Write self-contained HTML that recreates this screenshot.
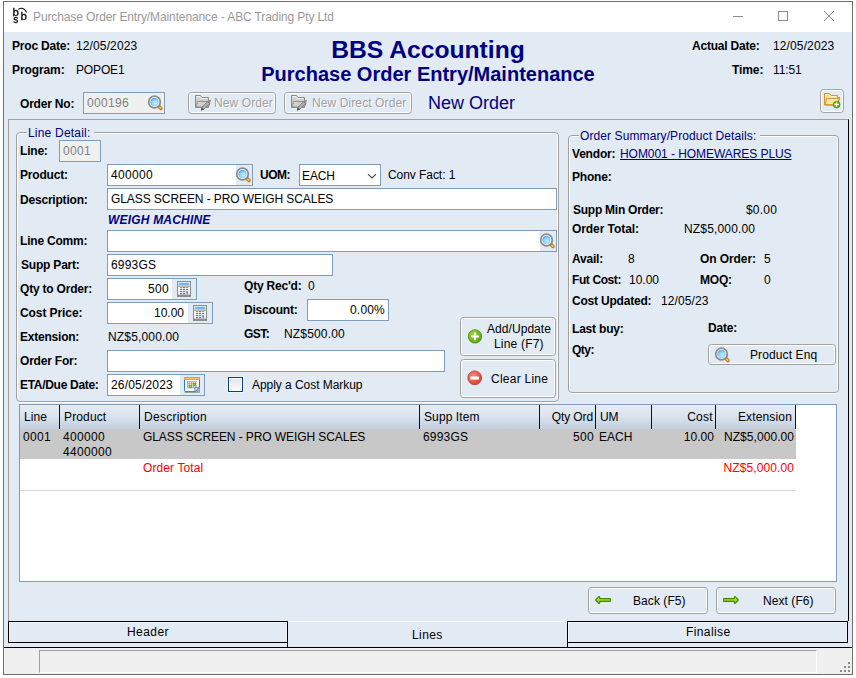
<!DOCTYPE html>
<html lang="en">
<head>
<meta charset="utf-8">
<title>Purchase Order Entry/Maintenance - ABC Trading Pty Ltd</title>
<style>
*{box-sizing:border-box;margin:0;padding:0}
html,body{width:856px;height:678px;overflow:hidden;background:#fff}
body{position:relative;font-family:"Liberation Sans",Arial,sans-serif;font-size:12px;line-height:14px;color:#000}
.a,.t,.b,.in,.btn,.ic,.ib{position:absolute}
.t,.b{white-space:nowrap;height:14px}
.b{font-weight:bold}
.r{text-align:right}
.nv{color:#000080}
.in{background:#fff;border:1px solid #7f9db9;height:22px;white-space:nowrap;padding:3px 3px 0 3px}
.dis{background:#f0f0f0;color:#808080}
.btn{border:1px solid #a3a3a3;border-radius:3.5px;background:#e2eaf3;box-shadow:inset 0 0 0 1px #fff;white-space:nowrap}
.ib{background:#e2eaf3}
.ic{width:16px;height:16px;overflow:visible}
#win{left:3px;top:1px;width:850px;height:674px;border:1px solid #6e6e6e;background:#e2eaf3}
#title{left:4px;top:2px;width:848px;height:30px;background:#fff}
.gb::before{content:'';position:absolute;left:1px;top:1px;right:1px;bottom:-1px;border:1px solid #fff;border-radius:3px}
.gb::after{content:'';position:absolute;left:0;top:0;right:0;bottom:0;border:1px solid #a0a0a0;border-radius:4px}
.lg{background:#e2eaf3}
#gh{background:linear-gradient(#e6ecf4,#dbe3ee 45%,#c2cfdf);}
.hs{top:405px;width:1px;height:24px;background:#111}
.tab{border:1px solid #000;text-align:center;padding-top:3px;box-shadow:inset 1px 1px 0 #f4f7fb,inset -1px 0 0 #f4f7fb}
.dt{color:#a0a0a0;text-shadow:1px 1px 0 #fff}
</style>
</head>
<body>

<svg width="0" height="0" style="position:absolute">
<defs>
<radialGradient id="lens" cx="0.6" cy="0.65" r="0.7"><stop offset="0" stop-color="#b8effc"/><stop offset="0.6" stop-color="#8fd0f5"/><stop offset="1" stop-color="#3f9ce8"/></radialGradient>
<linearGradient id="fold" x1="0" y1="0" x2="0" y2="1"><stop offset="0" stop-color="#fde9a8"/><stop offset="1" stop-color="#f5c75c"/></linearGradient>
<linearGradient id="gfold" x1="0" y1="0" x2="0" y2="1"><stop offset="0" stop-color="#dedede"/><stop offset="1" stop-color="#b2b2b2"/></linearGradient>
<radialGradient id="grn" cx="0.4" cy="0.35" r="0.75"><stop offset="0" stop-color="#a6d83a"/><stop offset="1" stop-color="#4f9a0c"/></radialGradient>
<radialGradient id="red" cx="0.4" cy="0.35" r="0.75"><stop offset="0" stop-color="#f58a7a"/><stop offset="1" stop-color="#d8382c"/></radialGradient>
<linearGradient id="arr" x1="0" y1="0" x2="0" y2="1"><stop offset="0.2" stop-color="#c8ec40"/><stop offset="0.8" stop-color="#93cc0c"/></linearGradient>
<g id="mag">
 <path d="M10.6 11 L13 13.4" stroke="#c07c16" stroke-width="3.6" stroke-linecap="round"/>
 <path d="M11.8 12.2 L12.9 13.3" stroke="#fbd067" stroke-width="1.4" stroke-linecap="round"/>
 <circle cx="6.5" cy="7" r="5.8" fill="#fff" stroke="#8c8c8c" stroke-width="1.8"/>
 <circle cx="6.5" cy="7" r="4.2" fill="url(#lens)"/>
</g>
<g id="calc">
 <rect x="1.5" y="0.5" width="13" height="15" fill="#f4f4f4" stroke="#8c8c8c"/>
 <rect x="2" y="13.6" width="12" height="1.9" fill="#8c8c8c"/>
 <rect x="2.5" y="1.5" width="11" height="3.2" fill="#a6d2fa"/>
 <rect x="3.2" y="2.3" width="9.6" height="1.4" fill="#5aa5ee"/>
 <rect x="2" y="4.8" width="12" height="0.9" fill="#9a9a9a"/>
 <rect x="4" y="6.1" width="2.2" height="1" fill="#f2711d"/><rect x="7" y="6.1" width="2.2" height="1" fill="#666"/><rect x="10" y="6.1" width="2.2" height="1" fill="#f2711d"/>
 <rect x="4" y="8.1" width="2.2" height="1" fill="#666"/><rect x="7" y="8.1" width="2.2" height="1" fill="#666"/><rect x="10" y="8.1" width="2.2" height="1" fill="#666"/>
 <rect x="4" y="10.1" width="2.2" height="1" fill="#666"/><rect x="7" y="10.1" width="2.2" height="1" fill="#666"/>
 <rect x="4" y="12.1" width="2.2" height="1" fill="#666"/><rect x="7" y="12.1" width="2.2" height="1" fill="#666"/>
 <rect x="10.2" y="10" width="1.9" height="3" fill="#4f9cea"/>
</g>
<g id="cal">
 <rect x="0.5" y="15" width="15" height="1" fill="#a6a6a6"/>
 <rect x="0.5" y="1" width="15" height="13.6" rx="1.3" fill="#fff" stroke="#1f84c6"/>
 <path d="M0 1.3 Q0 0 1.3 0 H14.7 Q16 0 16 1.3 V3 H0 Z" fill="#f7941d"/>
 <rect x="1.2" y="1.3" width="13.6" height="0.9" fill="#fcd3a0"/>
 <rect x="3" y="4.2" width="9.9" height="7.2" fill="#aaa"/>
 <g fill="#fff"><rect x="4.1" y="5.2" width="1" height="1"/><rect x="6.1" y="5.2" width="1" height="1"/><rect x="8.1" y="5.2" width="1" height="1"/><rect x="10.1" y="5.2" width="1" height="1"/><rect x="11.9" y="5.2" width="1" height="1"/><rect x="4.1" y="7.2" width="1" height="1"/><rect x="6.1" y="7.2" width="1" height="1"/><rect x="8.1" y="7.2" width="1" height="1"/><rect x="10.1" y="7.2" width="1" height="1"/><rect x="11.9" y="7.2" width="1" height="1"/><rect x="4.1" y="9.2" width="1" height="1"/><rect x="6.1" y="9.2" width="1" height="1"/><rect x="8.1" y="9.2" width="1" height="1"/><rect x="10.1" y="9.2" width="1" height="1"/><rect x="11.9" y="9.2" width="1" height="1"/></g>
 <rect x="5.1" y="8" width="2.9" height="2.9" fill="#6aa80a"/><rect x="6" y="8.9" width="1.1" height="1.1" fill="#b5e61d"/>
 <rect x="9" y="5.9" width="2.9" height="2.9" fill="#6aa80a"/><rect x="9.9" y="6.8" width="1.1" height="1.1" fill="#b5e61d"/>
 <path d="M10.4 15.2 L16 9.6 V16 H10.4 Z" fill="#a6a6a6"/>
 <path d="M10.9 14.6 V11.3 Q10.9 10.3 11.9 10.3 H15.2 Z" fill="#f1f7fd" stroke="#2a7fc0" stroke-width="0.9" stroke-linejoin="round"/>
</g>
<g id="folder">
 <path d="M1.5 1.6 H6.5 L8 3.6 H14.5 V5.5 H16.3 L14.5 13 H1.5 Z" fill="#b9b9b9" opacity="0.55"/>
 <path d="M0.5 0.5 H5.5 L7 2.5 H13.5 V4.5 H15.5 L13.5 12 H0.5 Z" fill="url(#fold)" stroke="#d8922c"/>
 <path d="M2.6 5.6 H15.2 L13.4 11.6 H1 Z" fill="#fbe391" stroke="#d8922c" stroke-width="0.9"/>
 <path d="M1.5 1.6 H5 L6.5 3.6 H12.5" fill="none" stroke="#fff8dc" stroke-width="0.9"/>
 <path d="M3.4 7 H13" fill="none" stroke="#fff8dc" stroke-width="0.9"/>
</g>
<g id="gfolder">
 <path d="M1.6 1.6 H6.6 L8 3.6 H14.6 V6 H16.4 L14.6 13.6 H1.6 Z" fill="#fff" opacity="0.9"/>
 <path d="M0.5 0.5 H5.5 L7 2.5 H13.5 V5.5 H15.5 L13.5 12.5 H0.5 Z" fill="url(#gfold)" stroke="#8a8a8a"/>
 <path d="M2.5 6.5 H15 L13.2 12 H1 Z" fill="#d2d2d2" stroke="#8a8a8a" stroke-width="0.9"/>
 <path d="M1.5 1.6 H5 L6.5 3.6 H12.5" fill="none" stroke="#f6f6f6" stroke-width="0.9"/>
 <path d="M6.2 15.2 L7 12.2 L12.6 6.6 L14.6 8.6 L9 14.2 Z" fill="#b0b0b0" stroke="#747474" stroke-width="0.9"/>
 <path d="M6.2 15.4 L7 12.6 L8.8 14.4 Z" fill="#4c4c4c"/>
</g>
<g id="plus">
 <circle cx="8" cy="8.4" r="6.7" fill="url(#grn)" stroke="#4a8f0a" stroke-width="0.8"/>
 <path d="M7 4.6 H9 V7.4 H11.8 V9.4 H9 V12.2 H7 V9.4 H4.2 V7.4 H7 Z" fill="#fff"/>
</g>
<g id="minus">
 <circle cx="7.7" cy="7.8" r="6.9" fill="url(#red)" stroke="#c8342a" stroke-width="0.8"/>
 <rect x="3.4" y="6.6" width="8.6" height="2.8" rx="0.5" fill="#fff"/>
</g>
<g id="aleft">
 <path d="M0.6 4.3 L4 0.8 L4.7 1.4 V2.9 H15.3 V5.7 H4.7 V7.2 L4 7.8 Z" fill="url(#arr)" stroke="#3f8702" stroke-width="1.1" stroke-linejoin="round" transform="translate(0,-0.3)"/>
</g>
<g id="aright">
 <path d="M15.4 4.3 L12 0.8 L11.3 1.4 V2.9 H0.7 V5.7 H11.3 V7.2 L12 7.8 Z" fill="url(#arr)" stroke="#3f8702" stroke-width="1.1" stroke-linejoin="round" transform="translate(0,-0.3)"/>
</g>
</defs></svg>

<div id="win" class="a"></div>
<div id="title" class="a"></div>
<svg class="a" style="left:12px;top:6px;width:18px;height:18px;overflow:visible;will-change:transform" viewBox="0 0 18 18" font-family="Liberation Mono,monospace" font-size="11.5" fill="#111" stroke="#111" stroke-width="0.35"><path d="M6.2 3.4 Q11.6 0 14.6 6.6" fill="none" stroke-width="1.1"/><text x="0.3" y="10">b</text><text x="8.2" y="14.2">b</text><text x="0.8" y="17" font-size="10">s</text></svg>
<div class="t" style="top:10px;left:33px;letter-spacing:-0.11px;color:#999;">Purchase Order Entry/Maintenance - ABC Trading Pty Ltd</div>
<svg class="a" style="left:730px;top:8px;width:110px;height:16px" viewBox="0 0 110 16" fill="none" stroke="#8a8a8a" stroke-width="1"><path d="M3 8.5 H13"/><rect x="48.5" y="3.5" width="9" height="9"/><path d="M94 3 L104 13 M104 3 L94 13"/></svg>
<div class="b" style="top:39px;left:12px;letter-spacing:-0.2px;">Proc Date:</div>
<div class="t" style="top:39px;left:76px;letter-spacing:0.12px;">12/05/2023</div>
<div class="b" style="top:63px;left:12px;letter-spacing:-0.1px;">Program:</div>
<div class="t" style="top:63px;left:76px;letter-spacing:-0.15px;">POPOE1</div>
<div class="b nv" style="left:0;width:856px;top:36px;text-align:center;font-size:24.67px;line-height:28px;height:28px">BBS Accounting</div>
<div class="b nv" style="left:0;width:856px;top:62px;text-align:center;font-size:20px;line-height:24px;height:24px">Purchase Order Entry/Maintenance</div>
<div class="b" style="top:39px;left:692px;letter-spacing:-0.2px;">Actual Date:</div>
<div class="t" style="top:39px;left:773px;letter-spacing:0.12px;">12/05/2023</div>
<div class="b" style="top:63px;left:732px;letter-spacing:-0.1px;">Time:</div>
<div class="t" style="top:63px;left:773px;letter-spacing:-0.1px;">11:51</div>
<div class="b" style="top:97px;left:20px;letter-spacing:-0.2px;">Order No:</div>
<div class="in dis" style="left:83px;top:92px;width:82px;height:22px;letter-spacing:0.33px;">000196</div>
<svg class="ic" style="left:148px;top:95px;width:16px;height:16px" viewBox="0 0 16 16"><use href="#mag"/></svg>
<div class="btn" style="left:188px;top:92px;width:88px;height:22px"></div>
<svg class="ic" style="left:195px;top:95px;width:16px;height:16px" viewBox="0 0 16 16"><use href="#gfolder"/></svg>
<div class="t dt" style="top:96px;left:214px;letter-spacing:0.1px;">New Order</div>
<div class="btn" style="left:284px;top:92px;width:128px;height:22px"></div>
<svg class="ic" style="left:291px;top:95px;width:16px;height:16px" viewBox="0 0 16 16"><use href="#gfolder"/></svg>
<div class="t dt" style="top:96px;left:312px;letter-spacing:0.1px;">New Direct Order</div>
<div class="t nv" style="left:428px;top:92px;font-size:18px;line-height:22px;height:22px">New Order</div>
<div class="btn" style="left:820px;top:89px;width:24px;height:24px"></div>
<svg class="ic" style="left:824px;top:93px;width:16px;height:16px" viewBox="0 0 16 16"><use href="#folder"/></svg>
<svg class="ic" style="left:832px;top:100px;width:9px;height:9px" viewBox="0 0 9 9"><circle cx="4.6" cy="4.6" r="3.4" fill="url(#grn)" stroke="#3f8a08" stroke-width="0.7"/><path d="M4.1 2.4 H5.1 V4.1 H6.8 V5.1 H5.1 V6.8 H4.1 V5.1 H2.4 V4.1 H4.1 Z" fill="#fff"/></svg>
<div class="a" style="left:8px;top:119px;width:841px;height:502px;border-top:1px solid #a0a0a0;border-left:1px solid #a0a0a0;border-right:1px solid #000"></div>
<div class="a gb" style="left:16px;top:132px;width:543px;height:270px;"></div>
<div class="t nv lg" style="left:27px;top:126px;padding:0 4px 0 1px;letter-spacing:0.2px">Line Detail:</div>
<div class="b" style="top:144px;left:20px;letter-spacing:-0.2px;">Line:</div>
<div class="in dis" style="left:59px;top:140px;width:42px;height:22px;letter-spacing:0.33px;">0001</div>
<div class="b" style="top:168px;left:20px;letter-spacing:-0.2px;">Product:</div>
<div class="in " style="left:107px;top:164px;width:146px;height:22px;letter-spacing:0.33px;">400000</div>
<div class="ib" style="left:236px;top:165px;width:16px;height:20px;"></div>
<svg class="ic" style="left:236px;top:167px;width:16px;height:16px" viewBox="0 0 16 16"><use href="#mag"/></svg>
<div class="b" style="top:168px;left:260px;letter-spacing:-0.5px;">UOM:</div>
<div class="in " style="left:299px;top:164px;width:82px;height:22px;padding-left:2px;padding-top:4px;letter-spacing:-0.1px;">EACH</div>
<svg class="a" style="left:367px;top:173px;width:10px;height:6px" viewBox="0 0 10 6"><path d="M1 1.2 L5 5 L9 1.2" fill="none" stroke="#444" stroke-width="1.1"/></svg>
<div class="t" style="top:168px;left:388px;letter-spacing:-0.06px;">Conv Fact: 1</div>
<div class="b" style="top:193px;left:20px;letter-spacing:-0.2px;">Description:</div>
<div class="in " style="left:107px;top:188px;width:450px;height:22px;letter-spacing:-0.08px;">GLASS SCREEN - PRO WEIGH SCALES</div>
<div class="b nv" style="top:213px;left:108px;letter-spacing:0.19px;font-style:italic;">WEIGH MACHINE</div>
<div class="b" style="top:234px;left:20px;letter-spacing:-0.2px;">Line Comm:</div>
<div class="in " style="left:107px;top:230px;width:450px;height:22px;"></div>
<div class="ib" style="left:540px;top:231px;width:16px;height:20px;"></div>
<svg class="ic" style="left:540px;top:233px;width:16px;height:16px" viewBox="0 0 16 16"><use href="#mag"/></svg>
<div class="b" style="top:258px;left:21px;letter-spacing:-0.2px;">Supp Part:</div>
<div class="in " style="left:107px;top:254px;width:226px;height:22px;letter-spacing:0.19px;">6993GS</div>
<div class="b" style="top:282px;left:20px;letter-spacing:-0.2px;">Qty to Order:</div>
<div class="in r" style="left:107px;top:278px;width:90px;height:22px;padding-right:27px;letter-spacing:0.33px;">500</div>
<div class="ib" style="left:172px;top:279px;width:24px;height:20px;"></div>
<svg class="ic" style="left:176px;top:281px;width:16px;height:16px" viewBox="0 0 16 16"><use href="#calc"/></svg>
<div class="b" style="top:306px;left:20px;letter-spacing:-0.08px;">Cost Price:</div>
<div class="in r" style="left:107px;top:302px;width:106px;height:22px;padding-right:28px;">10.00</div>
<div class="ib" style="left:188px;top:303px;width:24px;height:20px;"></div>
<svg class="ic" style="left:192px;top:305px;width:16px;height:16px" viewBox="0 0 16 16"><use href="#calc"/></svg>
<div class="b" style="top:330px;left:20px;letter-spacing:-0.22px;">Extension:</div>
<div class="t" style="top:330px;left:108px;letter-spacing:0.16px;">NZ$5,000.00</div>
<div class="b" style="top:354px;left:20px;letter-spacing:-0.2px;">Order For:</div>
<div class="in " style="left:107px;top:350px;width:338px;height:22px;"></div>
<div class="b" style="top:378px;left:20px;letter-spacing:-0.3px;">ETA/Due Date:</div>
<div class="in " style="left:107px;top:374px;width:98px;height:22px;letter-spacing:0.18px;">26/05/2023</div>
<div class="ib" style="left:180px;top:375px;width:24px;height:20px;"></div>
<svg class="ic" style="left:184px;top:377px;width:16px;height:16px" viewBox="0 0 16 16"><use href="#cal"/></svg>
<div class="a" style="left:228px;top:377px;width:15px;height:15px;border:1px solid #123f73;background:linear-gradient(#e4e4e4,#fbfbfb);box-shadow:inset 0 0 0 1px #fff,0 0 0 1px #eaf0f9"></div>
<div class="t" style="top:378px;left:252px;letter-spacing:-0.05px;">Apply a Cost Markup</div>
<div class="b" style="top:279px;left:244px;letter-spacing:-0.2px;">Qty Rec'd:</div>
<div class="t" style="top:279px;left:308px;">0</div>
<div class="b" style="top:303px;left:244px;letter-spacing:-0.2px;">Discount:</div>
<div class="in r" style="left:307px;top:299px;width:82px;height:22px;padding-right:3px;letter-spacing:0.2px;">0.00%</div>
<div class="b" style="top:327px;left:244px;letter-spacing:-0.5px;">GST:</div>
<div class="t" style="top:327px;left:284px;letter-spacing:0.16px;">NZ$500.00</div>
<div class="btn" style="left:460px;top:317px;width:96px;height:39px"></div>
<svg class="ic" style="left:467px;top:328px;width:16px;height:16px" viewBox="0 0 16 16"><use href="#plus"/></svg>
<div class="t" style="top:322px;left:487px;letter-spacing:0.06px;">Add/Update</div>
<div class="t" style="top:337px;left:494px;letter-spacing:0.2px;">Line (F7)</div>
<div class="btn" style="left:460px;top:359px;width:96px;height:39px"></div>
<svg class="ic" style="left:467px;top:370px;width:16px;height:16px" viewBox="0 0 16 16"><use href="#minus"/></svg>
<div class="t" style="top:372px;left:491px;letter-spacing:0.25px;">Clear Line</div>
<div class="a gb" style="left:568px;top:135px;width:271px;height:258px;"></div>
<div class="t nv lg" style="left:579px;top:129px;padding:0 4px 0 1px;letter-spacing:0.1px">Order Summary/Product Details:</div>
<div class="b" style="top:147px;left:572px;letter-spacing:-0.2px;">Vendor:</div>
<div class="t nv" style="top:147px;left:620px;letter-spacing:-0.06px;text-decoration:underline;">HOM001 - HOMEWARES PLUS</div>
<div class="b" style="top:170px;left:572px;letter-spacing:-0.2px;">Phone:</div>
<div class="b" style="top:203px;left:573px;letter-spacing:-0.25px;">Supp Min Order:</div>
<div class="t" style="top:203px;left:746px;letter-spacing:0.2px;">$0.00</div>
<div class="b" style="top:222px;left:572px;letter-spacing:-0.07px;">Order Total:</div>
<div class="t" style="top:222px;left:684px;letter-spacing:0.16px;">NZ$5,000.00</div>
<div class="b" style="top:252px;left:572px;letter-spacing:-0.2px;">Avail:</div>
<div class="t" style="top:252px;left:628px;">8</div>
<div class="b" style="top:252px;left:700px;letter-spacing:-0.08px;">On Order:</div>
<div class="t" style="top:252px;left:764px;">5</div>
<div class="b" style="top:273px;left:572px;letter-spacing:-0.4px;">Fut Cost:</div>
<div class="t" style="top:273px;left:629px;">10.00</div>
<div class="b" style="top:273px;left:700px;letter-spacing:-0.2px;">MOQ:</div>
<div class="t" style="top:273px;left:764px;">0</div>
<div class="b" style="top:294px;left:572px;letter-spacing:-0.2px;">Cost Updated:</div>
<div class="t" style="top:294px;left:661px;letter-spacing:0.1px;">12/05/23</div>
<div class="b" style="top:322px;left:572px;letter-spacing:-0.2px;">Last buy:</div>
<div class="b" style="top:321px;left:708px;letter-spacing:-0.2px;">Date:</div>
<div class="b" style="top:343px;left:572px;letter-spacing:-0.5px;">Qty:</div>
<div class="btn" style="left:708px;top:344px;width:128px;height:21px"></div>
<svg class="ic" style="left:715px;top:347px;width:16px;height:16px" viewBox="0 0 16 16"><use href="#mag"/></svg>
<div class="t" style="top:348px;left:750px;letter-spacing:0.11px;">Product Enq</div>
<div class="a" style="left:19px;top:404px;width:818px;height:178px;border:1px solid #7f9db9;background:#fff"></div>
<div class="a" id="gh" style="left:20px;top:405px;width:776px;height:24px"></div>
<div class="a hs" style="left:59px"></div>
<div class="a hs" style="left:139px"></div>
<div class="a hs" style="left:419px"></div>
<div class="a hs" style="left:539px"></div>
<div class="a hs" style="left:595px"></div>
<div class="a hs" style="left:651px"></div>
<div class="a hs" style="left:715px"></div>
<div class="a hs" style="left:795px"></div>
<div class="t" style="top:410px;left:24px;letter-spacing:0.11px;">Line</div>
<div class="t" style="top:410px;left:64px;letter-spacing:0.14px;">Product</div>
<div class="t" style="top:410px;left:144px;letter-spacing:0.27px;">Description</div>
<div class="t" style="top:410px;left:424px;letter-spacing:0.1px;">Supp Item</div>
<div class="t" style="top:410px;right:263px;letter-spacing:-0.1px;">Qty Ord</div>
<div class="t" style="top:410px;left:600px;letter-spacing:-0.1px;">UM</div>
<div class="t" style="top:410px;right:143px;letter-spacing:0.3px;">Cost</div>
<div class="t" style="top:410px;right:64px;letter-spacing:0.15px;">Extension</div>
<div class="a" style="left:20px;top:429px;width:776px;height:30px;background:#c8c8c8"></div>
<div class="t" style="top:430px;left:23px;letter-spacing:0.33px;">0001</div>
<div class="t" style="top:430px;left:63px;letter-spacing:0.33px;">400000</div>
<div class="t" style="top:445px;left:63px;letter-spacing:0.33px;">4400000</div>
<div class="t" style="top:430px;left:143px;letter-spacing:-0.08px;">GLASS SCREEN - PRO WEIGH SCALES</div>
<div class="t" style="top:430px;left:423px;letter-spacing:0.19px;">6993GS</div>
<div class="t" style="top:430px;right:262px;letter-spacing:0.33px;">500</div>
<div class="t" style="top:430px;left:599px;">EACH</div>
<div class="t" style="top:430px;right:142px;letter-spacing:0.05px;">10.00</div>
<div class="t" style="top:430px;right:62px;letter-spacing:0.06px;">NZ$5,000.00</div>
<div class="t" style="top:461px;left:143px;letter-spacing:0.11px;color:#ff0000;">Order Total</div>
<div class="t" style="top:461px;right:62px;letter-spacing:0.1px;color:#ff0000;">NZ$5,000.00</div>
<div class="a" style="left:20px;top:490px;width:776px;height:1px;background:#d8d8d8"></div>
<div class="btn" style="left:588px;top:587px;width:120px;height:27px"></div>
<svg class="ic" style="left:595px;top:596px;width:16px;height:9px" viewBox="0 0 16 9"><use href="#aleft"/></svg>
<div class="t" style="top:594px;left:633px;letter-spacing:0.07px;">Back (F5)</div>
<div class="btn" style="left:716px;top:587px;width:120px;height:27px"></div>
<svg class="ic" style="left:723px;top:596px;width:16px;height:9px" viewBox="0 0 16 9"><use href="#aright"/></svg>
<div class="t" style="top:594px;left:763px;letter-spacing:0.07px;">Next (F6)</div>
<div class="a" style="left:8px;top:621px;width:280px;height:22px;border:1px solid #000;box-shadow:inset 1px 1px 0 #f4f7fb,inset -1px 0 0 #f4f7fb"></div>
<div class="a" style="left:287px;top:643px;width:1px;height:4px;background:#000"></div>
<div class="a" style="left:288px;top:621px;width:279px;height:1px;background:#fff"></div>
<div class="a" style="left:567px;top:621px;width:281px;height:22px;border:1px solid #000;box-shadow:inset 1px 1px 0 #f4f7fb,inset -1px 0 0 #f4f7fb"></div>
<div class="a" style="left:567px;top:643px;width:1px;height:4px;background:#000"></div>
<div class="t" style="top:625px;left:127px;letter-spacing:0.45px;">Header</div>
<div class="t" style="top:628px;left:412px;letter-spacing:0.4px;">Lines</div>
<div class="t" style="top:625px;left:686px;letter-spacing:0.4px;">Finalise</div>
<div class="a" style="left:4px;top:647px;width:848px;height:1px;background:#000"></div>
<div class="a" style="left:4px;top:648px;width:848px;height:26px;background:#f0f0f0"></div>
<div class="a" style="left:39px;top:650px;width:778px;height:23px;border-top:1px solid #a0a0a0;border-left:1px solid #a0a0a0;border-right:1px solid #fff;border-bottom:1px solid #fff"></div>
<svg class="a" style="left:840px;top:661px;width:12px;height:12px" viewBox="0 0 12 12" fill="#8c8c8c"><rect x="8" y="1" width="2" height="2"/><rect x="4" y="5" width="2" height="2"/><rect x="8" y="5" width="2" height="2"/><rect x="0" y="9" width="2" height="2"/><rect x="4" y="9" width="2" height="2"/><rect x="8" y="9" width="2" height="2"/></svg>
</body>
</html>
